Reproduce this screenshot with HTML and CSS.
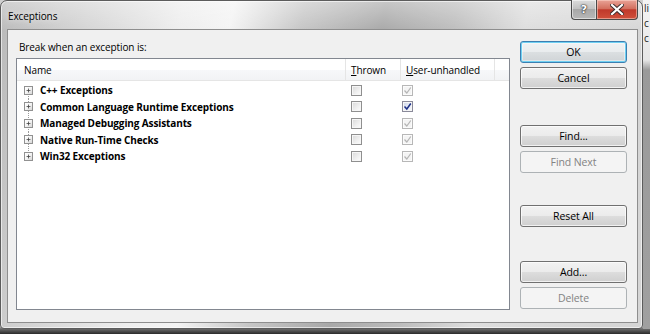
FILE: index.html
```html
<!DOCTYPE html>
<html>
<head>
<meta charset="utf-8">
<link rel="stylesheet" href="styles.css">
</head>
<body>
<div class="desktop">
  <div class="window">
    <div class="titlebar">
      <span class="title">Exceptions</span>
      <div class="caption-buttons">
        <div class="cap help"><span>?</span></div>
        <div class="cap close">
          <svg width="14" height="11" viewBox="0 0 14 11"><path d="M2 1 L12 10 M12 1 L2 10" stroke="#3a2a2a" stroke-width="4" stroke-linecap="square"/><path d="M2 1 L12 10 M12 1 L2 10" stroke="#ffffff" stroke-width="2.2" stroke-linecap="square"/></svg>
        </div>
      </div>
    </div>
    <div class="client">
      <div class="left">
        <div class="label">Break when an exception is:</div>
        <div class="list">
          <div class="header">
            <div class="col name hname">Name</div>
            <div class="col thrown hthrown"><u>T</u>hrown</div>
            <div class="col uu huu"><u>U</u>ser-unhandled</div>
            <div class="col rest"></div>
          </div>
          <div class="rows">
            <div class="row first">
              <div class="col name"><span class="exp"><svg width="9" height="9" viewBox="0 0 9 9"><path d="M2 4.5 H7 M4.5 2 V7" stroke="#404040" stroke-width="1"/></svg></span><span class="txt">C++ Exceptions</span></div>
              <div class="col thrown"><span class="cb"></span></div>
              <div class="col uu"><span class="cb checked disabled"><svg width="9" height="9" viewBox="0 0 9 9"><path d="M1.5 4.5 L3.8 7 L7.8 1.5" fill="none" stroke="#b4b4b4" stroke-width="1.2"/></svg></span></div>
            </div>
            <div class="row">
              <div class="col name"><span class="exp"><svg width="9" height="9" viewBox="0 0 9 9"><path d="M2 4.5 H7 M4.5 2 V7" stroke="#404040" stroke-width="1"/></svg></span><span class="txt">Common Language Runtime Exceptions</span></div>
              <div class="col thrown"><span class="cb"></span></div>
              <div class="col uu"><span class="cb checked active"><svg width="9" height="9" viewBox="0 0 9 9"><path d="M1.5 4.5 L3.8 7 L7.8 1.5" fill="none" stroke="#1c2f86" stroke-width="1.5"/></svg></span></div>
            </div>
            <div class="row">
              <div class="col name"><span class="exp"><svg width="9" height="9" viewBox="0 0 9 9"><path d="M2 4.5 H7 M4.5 2 V7" stroke="#404040" stroke-width="1"/></svg></span><span class="txt">Managed Debugging Assistants</span></div>
              <div class="col thrown"><span class="cb"></span></div>
              <div class="col uu"><span class="cb checked disabled"><svg width="9" height="9" viewBox="0 0 9 9"><path d="M1.5 4.5 L3.8 7 L7.8 1.5" fill="none" stroke="#b4b4b4" stroke-width="1.2"/></svg></span></div>
            </div>
            <div class="row">
              <div class="col name"><span class="exp"><svg width="9" height="9" viewBox="0 0 9 9"><path d="M2 4.5 H7 M4.5 2 V7" stroke="#404040" stroke-width="1"/></svg></span><span class="txt">Native Run-Time Checks</span></div>
              <div class="col thrown"><span class="cb"></span></div>
              <div class="col uu"><span class="cb checked disabled"><svg width="9" height="9" viewBox="0 0 9 9"><path d="M1.5 4.5 L3.8 7 L7.8 1.5" fill="none" stroke="#b4b4b4" stroke-width="1.2"/></svg></span></div>
            </div>
            <div class="row last">
              <div class="col name"><span class="exp"><svg width="9" height="9" viewBox="0 0 9 9"><path d="M2 4.5 H7 M4.5 2 V7" stroke="#404040" stroke-width="1"/></svg></span><span class="txt">Win32 Exceptions</span></div>
              <div class="col thrown"><span class="cb"></span></div>
              <div class="col uu"><span class="cb checked disabled"><svg width="9" height="9" viewBox="0 0 9 9"><path d="M1.5 4.5 L3.8 7 L7.8 1.5" fill="none" stroke="#b4b4b4" stroke-width="1.2"/></svg></span></div>
            </div>
          </div>
        </div>
      </div>
      <div class="right">
        <div class="btn default">OK</div>
        <div class="btn gap4">Cancel</div>
        <div class="btn find">Find...</div>
        <div class="btn gap4 disabled">Find Next</div>
        <div class="btn reset">Reset All</div>
        <div class="btn add">Add...</div>
        <div class="btn gap4 disabled">Delete</div>
      </div>
    </div>
  </div>
  <div class="side">
    <span class="s1">li</span>
    <span class="s2">c</span>
    <span class="s3">c</span>
  </div>
</div>
</body>
</html>
```

FILE: styles.css
```css
* { box-sizing: border-box; }
html, body { margin: 0; padding: 0; }
body {
  width: 650px;
  height: 334px;
  overflow: hidden;
  background: #2e2e2e;
  font-family: "Open Sans", "Noto Sans", sans-serif;
  font-size: 10px;
  letter-spacing: -0.1px;
  color: #000;
}
.desktop {
  display: flex;
  width: 650px;
  height: 334px;
  background: linear-gradient(to bottom, #cfcfcf 0, #cfcfcf 326px, #6a6a6a 329px, #2a2a2a 334px);
}
.window {
  width: 643px;
  height: 329px;
  border: 1px solid #5c5c5c;
  border-radius: 7px 7px 4px 4px;
  background:
    linear-gradient(to bottom, rgba(255,255,255,0.35), rgba(255,255,255,0) 30px),
    linear-gradient(100deg, #b9b9b9 0, #cdcdcd 60px, #eeeeee 180px, #f4f4f4 230px, #c6c6c6 300px, #a9a9a9 380px, #bdbdbd 450px, #dedede 520px, #d5d5d5 643px);
  box-shadow: inset 0 0 0 1px rgba(255,255,255,0.6);
  display: flex;
  flex-direction: column;
}
.titlebar {
  height: 28px;
  display: flex;
  justify-content: space-between;
  align-items: flex-start;
  flex-shrink: 0;
}
.title {
  margin: 8px 0 0 7px;
  font-size: 10px;
  line-height: 14px;
  color: #000;
  text-shadow: 0 0 6px rgba(255,255,255,0.9);
}
.caption-buttons {
  display: flex;
  margin-right: 4px;
  margin-top: -1px;
}
.cap {
  height: 20px;
  border: 1px solid #4a4a4a;
  border-top: none;
  display: flex;
  align-items: center;
  justify-content: center;
}
.help {
  width: 25px;
  border-radius: 0 0 0 4px;
  border-right: none;
  background: linear-gradient(to bottom, #dcdcdc 0, #c2c2c2 45%, #a8a8a8 50%, #b8b8b8 100%);
  box-shadow: inset 0 0 0 1px rgba(255,255,255,0.5);
}
.help span {
  color: #fff;
  font-family: "DejaVu Sans", sans-serif;
  font-weight: bold;
  font-size: 11px;
  text-shadow: 0 0 1px #333, 0 0 1px #333, 0 0 2px #333;
}
.close {
  width: 42px;
  border-radius: 0 0 4px 0;
  background: linear-gradient(to bottom, #e9a397 0, #d3705f 45%, #c0392b 52%, #d0503b 100%);
  box-shadow: inset 0 0 0 1px rgba(255,220,210,0.5);
}
.client {
  margin: 0 4px 0 6px;
  height: 294px;
  background: #f0f0f0;
  border: 1px solid #8e8e8e;
  display: flex;
  padding: 0 9px 0 8px;
}
.left {
  width: 494px;
  padding-top: 9px;
  flex-shrink: 0;
}
.label {
  padding-left: 3px;
  line-height: 16px;
  height: 16px;
  margin-bottom: 3px;
}
.list {
  height: 252px;
  border: 1px solid #828790;
  background: #fff;
}
.header {
  height: 22px;
  display: flex;
  border-bottom: 1px solid #e5e5e5;
  background: linear-gradient(to bottom, #ffffff 0, #ffffff 50%, #f7f8fa 51%, #f2f3f5 100%);
}
.col { flex-shrink: 0; display: flex; align-items: center; }
.name { width: 329px; }
.thrown { width: 55px; }
.uu { width: 94px; }
.rest { flex: 1; }
.header .col {
  border-right: 1px solid #e5e5e5;
  line-height: 20px;
}
.header .rest { border-right: none; }
.hname { padding-left: 7px; }
.hthrown { padding-left: 5px; }
.huu { padding-left: 5px; }
.header u { text-decoration: underline; text-underline-offset: 1px; }
.rows { padding-top: 1px; }
.row {
  display: flex;
  height: 16.5px;
}
.row .name {
  padding-left: 7px;
  font-weight: bold;
  background-image: linear-gradient(to bottom, #9a9a9a 50%, transparent 50%);
  background-size: 1px 2px;
  background-repeat: repeat-y;
  background-position: 11px 0;
}
.row.first .name { background-clip: content-box; padding-top: 8px; }
.row.first .name .exp, .row.first .name .txt { margin-top: -8px; }
.row.last .name { background-image: none; }
.row.last .name .exp { position: relative; }
.row.last .name .exp::before {
  content: "";
  position: absolute;
  left: 3px;
  top: -5px;
  width: 1px;
  height: 4px;
  background-image: linear-gradient(to bottom, #9a9a9a 50%, transparent 50%);
  background-size: 1px 2px;
}
.exp {
  width: 9px;
  height: 9px;
  border: 1px solid #919191;
  background: linear-gradient(135deg, #ffffff 0, #f4f4f4 50%, #d6d6d6 100%);
  display: flex;
  align-items: center;
  justify-content: center;
  margin-right: 7px;
}
.exp svg { display: block; width: 7px; height: 7px; }
.txt { white-space: nowrap; line-height: 16px; letter-spacing: -0.12px; }
.row .thrown { padding-left: 5px; }
.row .uu { padding-left: 1px; }
.cb {
  width: 11px;
  height: 11px;
  border: 1px solid #8f8f8f;
  background: linear-gradient(135deg, #d8d8d8 0, #f0f0f0 60%, #fdfdfd 100%);
  box-shadow: inset 0 0 0 1px #f6f6f6;
  display: flex;
  align-items: center;
  justify-content: center;
}
.cb.disabled {
  border-color: #b7b7b7;
  background: #f4f4f4;
  box-shadow: inset 0 0 0 1px #fbfbfb;
}
.cb.active {
  border-color: #8a8a9a;
  background: linear-gradient(135deg, #cfd6e8 0, #e8ecf6 60%, #f8f9fd 100%);
}
.cb svg { display: block; }
.right {
  width: 107px;
  margin-left: 10px;
  padding-top: 11px;
  flex-shrink: 0;
  display: flex;
  flex-direction: column;
}
.btn {
  height: 22px;
  border: 1px solid #707070;
  border-radius: 3px;
  background: linear-gradient(to bottom, #f2f2f2 0, #ebebeb 50%, #dddddd 51%, #cfcfcf 100%);
  box-shadow: inset 0 0 0 1px rgba(255,255,255,0.7);
  display: flex;
  align-items: center;
  justify-content: center;
  line-height: 14px;
  font-size: 10.5px;
  color: #000;
}
.btn.default {
  border-color: #3c7fb1;
  box-shadow: inset 0 0 0 1px #6fd0f2, inset 0 0 0 2px rgba(255,255,255,0.4);
  background: linear-gradient(to bottom, #f0f2f3 0, #e9ecee 50%, #dbdfe1 51%, #cfd3d6 100%);
}
.btn.disabled {
  border-color: #adb2b5;
  background: #f4f4f4;
  box-shadow: none;
  color: #838383;
}
.gap4 { margin-top: 4px; }
.find { margin-top: 36px; }
.reset { margin-top: 32px; }
.add { margin-top: 34px; }
.side {
  flex: 1;
  height: 329px;
  display: flex;
  flex-direction: column;
  font-size: 10px;
  line-height: 15px;
  color: #222;
  padding-top: 1px;
  background: linear-gradient(to bottom, #f4f4f4 0, #e6e6e6 60px, #9a9a9a 70px, #a0a0a0 100%);
}
.side span { padding-left: 1px; }
```
